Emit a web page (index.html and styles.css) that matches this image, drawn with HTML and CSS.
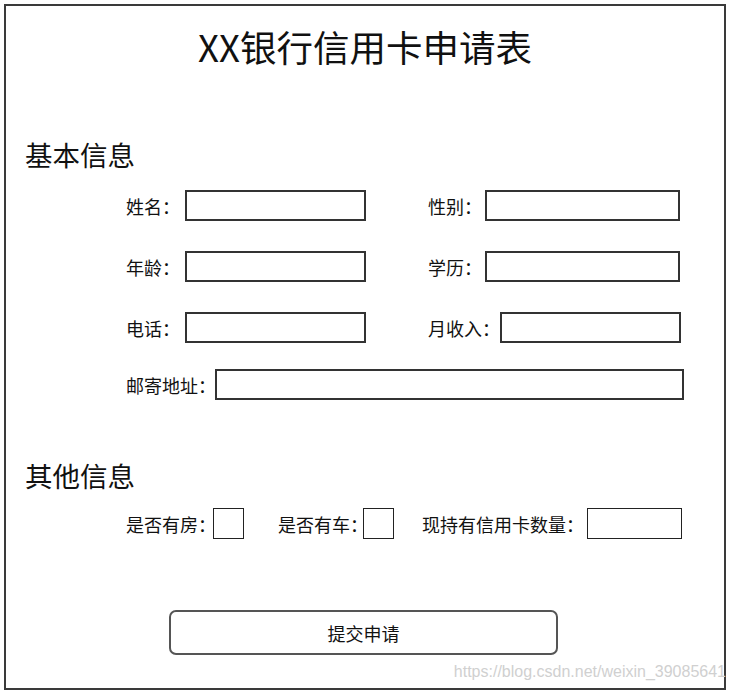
FILE: index.html
```html
<!DOCTYPE html>
<html lang="zh-CN">
<head>
<meta charset="utf-8">
<title>XX银行信用卡申请表</title>
<link rel="stylesheet" href="styles.css">
</head>
<body>
<div class="page">
  <h1 class="title">XX银行信用卡申请表</h1>

  <h2 class="section">基本信息</h2>
  <div class="row row-first">
    <div class="field field-left"><span class="label lw59">姓名：</span><input class="box w181" type="text"></div>
    <div class="field"><span class="label lw57">性别：</span><input class="box w195" type="text"></div>
  </div>
  <div class="row row-gap">
    <div class="field field-left"><span class="label lw59">年龄：</span><input class="box w181" type="text"></div>
    <div class="field"><span class="label lw57">学历：</span><input class="box w195" type="text"></div>
  </div>
  <div class="row row-gap">
    <div class="field field-left"><span class="label lw59">电话：</span><input class="box w181" type="text"></div>
    <div class="field"><span class="label lw72">月收入：</span><input class="box w181" type="text"></div>
  </div>
  <div class="row row-addr">
    <div class="field"><span class="label lw89">邮寄地址：</span><input class="box w469" type="text"></div>
  </div>

  <h2 class="section section-other">其他信息</h2>
  <div class="row row-check">
    <div class="field"><span class="label lw87">是否有房：</span><input class="check" type="checkbox"></div>
    <div class="field field-car"><span class="label lw85">是否有车：</span><input class="check" type="checkbox"></div>
    <div class="field field-cards"><span class="label lw165">现持有信用卡数量：</span><input class="box thin w95" type="text"></div>
  </div>

  <button class="submit" type="button">提交申请</button>

  <div class="watermark">https://blog.csdn.net/weixin_39085641</div>
</div>
</body>
</html>
```

FILE: styles.css
```css
html, body {
  margin: 0;
  padding: 0;
  background: #fff;
}

body {
  font-family: "Microsoft YaHei", "Noto Sans CJK SC", sans-serif;
  color: #111;
}

.page {
  position: relative;
  box-sizing: border-box;
  width: 722px;
  height: 686px;
  margin: 4px;
  border: 2px solid #3a3a3a;
}

.title {
  margin: 0;
  padding-top: 21px;
  font-size: 36.5px;
  line-height: 40px;
  font-weight: normal;
  text-align: center;
  color: #111;
}

.section {
  margin: 70px 0 0 19px;
  font-size: 27.5px;
  line-height: 34px;
  font-weight: normal;
  color: #111;
}

.section-other {
  margin-top: 58px;
}

.row {
  display: flex;
  align-items: center;
  height: 31px;
  margin-left: 120px;
}

.row-first { margin-top: 19px; }
.row-gap { margin-top: 30px; }
.row-addr { margin-top: 26px; }
.row-check { margin-top: 16px; height: 31px; }

.field {
  display: flex;
  align-items: center;
}

.field-left {
  width: 302px;
}

.field-car {
  margin-left: 34px;
}

.field-cards {
  margin-left: 28px;
}

.label {
  flex: none;
  font-size: 18px;
  line-height: 22px;
  color: #111;
  white-space: nowrap;
  overflow: visible;
}

.lw57 { width: 57px; }
.lw59 { width: 59px; }
.lw72 { width: 72px; }
.lw85 { width: 85px; }
.lw87 { width: 87px; }
.lw89 { width: 89px; }
.lw165 { width: 165px; }

.box {
  -webkit-appearance: none;
  appearance: none;
  flex: none;
  box-sizing: border-box;
  height: 31px;
  margin: 0;
  padding: 0 4px;
  border: 2px solid #333;
  border-radius: 0;
  background: #fff;
  font: inherit;
}

.box.thin {
  height: 31px;
  border-width: 1px;
  border-color: #222;
}

.w181 { width: 181px; }
.w195 { width: 195px; }
.w469 { width: 469px; }
.w95 { width: 95px; }

.check {
  -webkit-appearance: none;
  appearance: none;
  flex: none;
  box-sizing: border-box;
  width: 31px;
  height: 31px;
  margin: 0;
  border: 1px solid #222;
  border-radius: 0;
  background: #fff;
}

.submit {
  display: block;
  box-sizing: border-box;
  width: 389px;
  height: 45px;
  margin: 71px 0 0 163px;
  padding: 0;
  border: 2px solid #555;
  border-radius: 7px;
  background: #fff;
  font-family: inherit;
  font-size: 18px;
  color: #111;
}

.watermark {
  position: absolute;
  right: -2px;
  bottom: 7px;
  font-family: "Liberation Sans", Arial, sans-serif;
  font-size: 16px;
  line-height: 18px;
  color: #d0d0d0;
  white-space: nowrap;
}
```
